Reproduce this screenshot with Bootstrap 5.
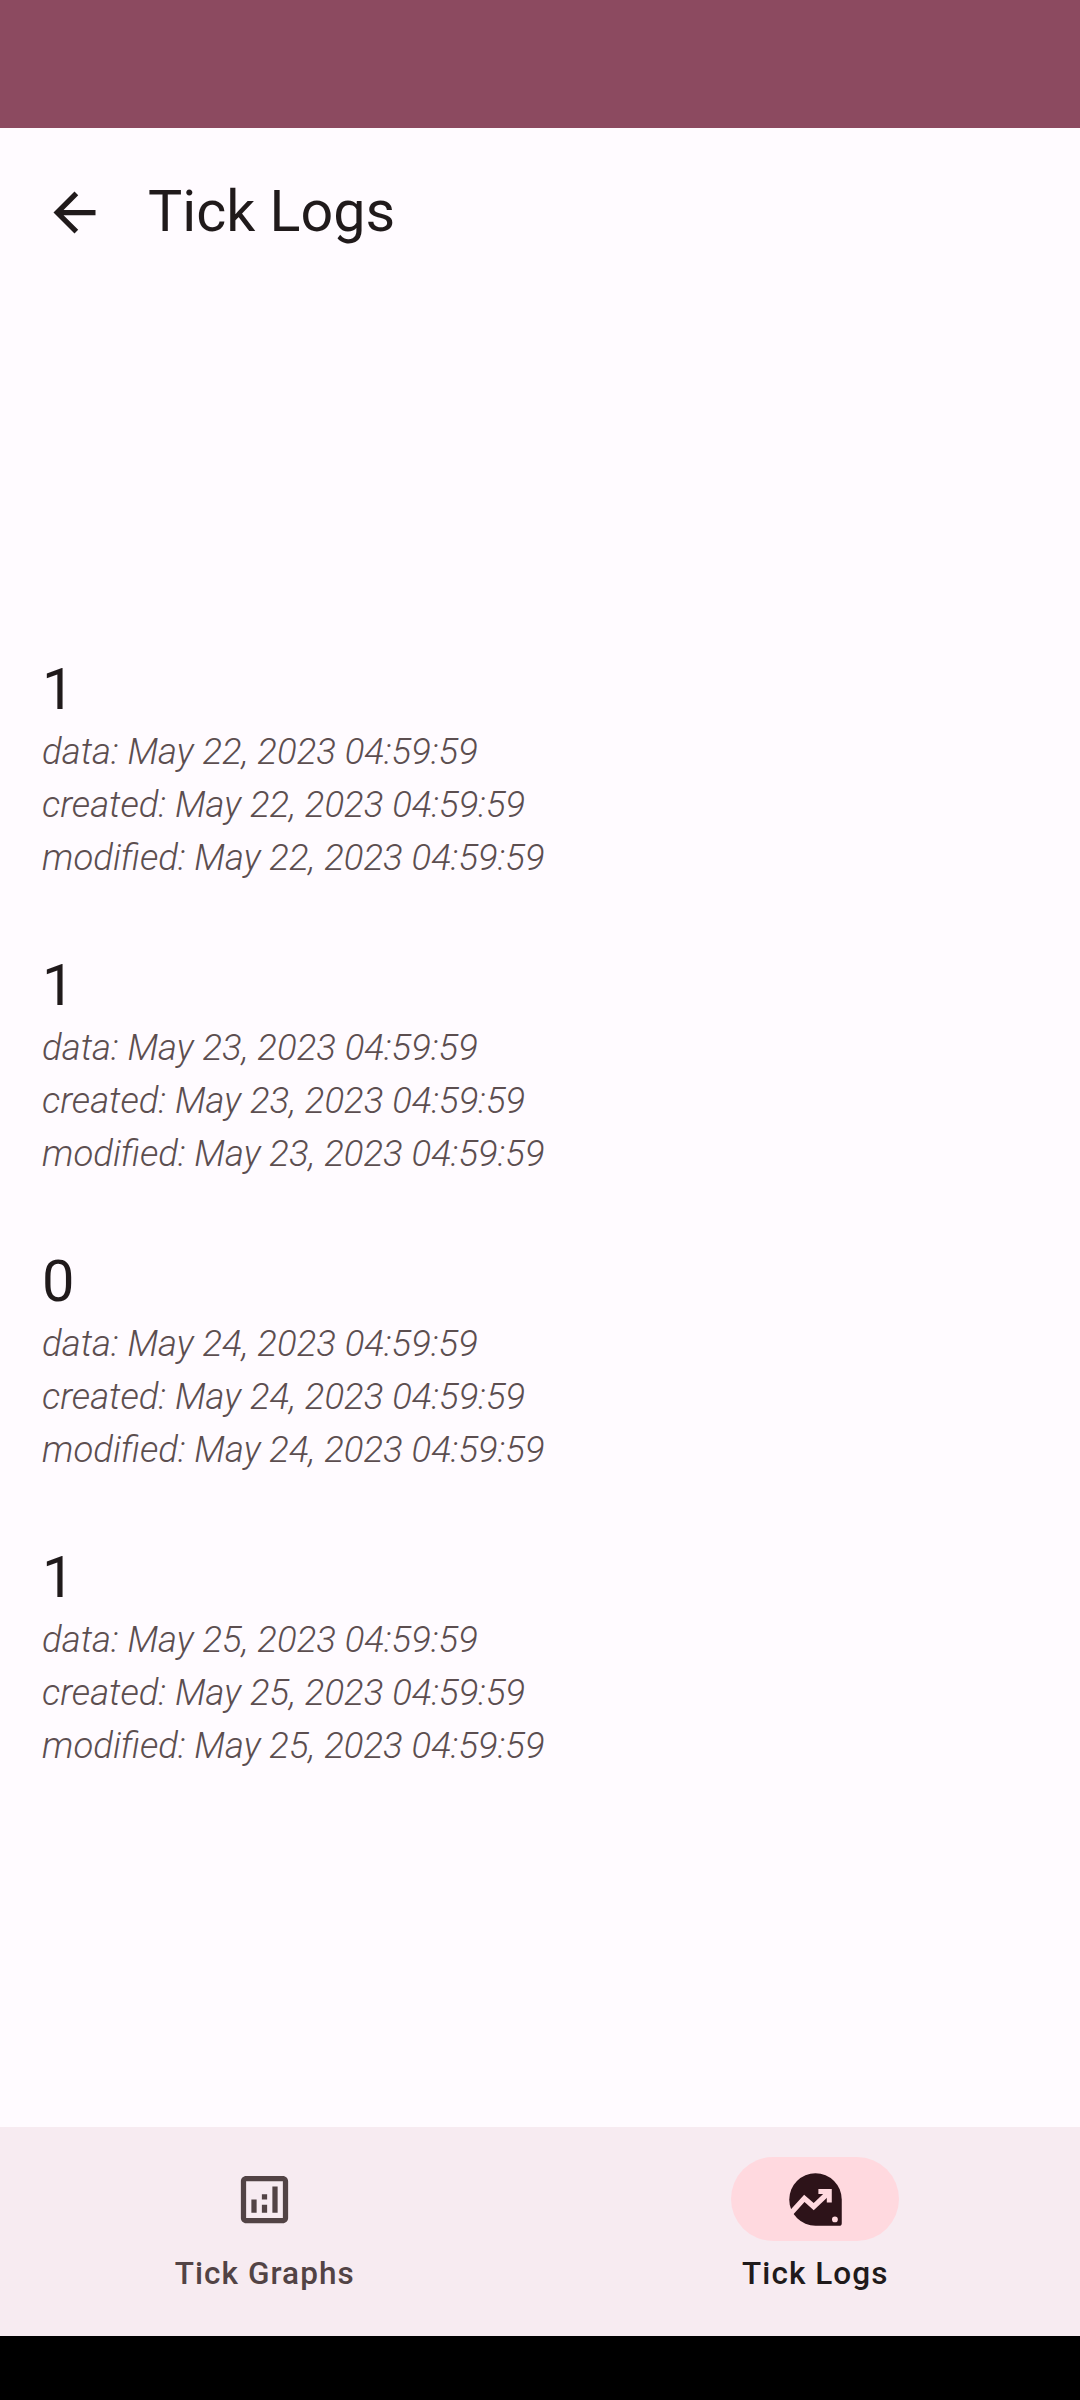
<!DOCTYPE html>
<html>
<head>
    <title>Tick Logs</title>
    <link rel="stylesheet" href="https://cdn.jsdelivr.net/npm/bootstrap@5.3.3/dist/css/bootstrap.min.css">
    <style>
        body {
            background-color: #fffbff;
            font-family: Roboto, "Liberation Sans", sans-serif;
            color: #201a1b;
        }
        .app-page {
            width: 1080px;
            height: 2400px;
        }
        .status-strip {
            height: 128px;
            background-color: #8c4a60;
        }
        .top-bar {
            height: 168px;
            padding-left: 43px;
        }
        .top-bar svg {
            width: 63px;
            height: 63px;
            fill: #201a1b;
        }
        .top-title {
            margin: 0 0 0 42px;
            font-size: 57.4px;
            font-weight: 400;
            line-height: 1;
        }
        .log-list {
            padding-left: 42px;
            padding-top: 56px;
        }
        .log-item {
            height: 296px;
        }
        .log-value {
            padding-top: 6px;
            font-size: 57.75px;
            font-weight: 400;
            line-height: 71px;
        }
        .log-meta {
            font-size: 36.5px;
            font-weight: 300;
            font-style: italic;
            line-height: 53px;
            color: #5c4e50;
        }
        .tab-bar {
            height: 209px;
            background-color: #f7ebf1;
            gap: 21px;
        }
        .tab-item {
            flex: 1 1 0;
            padding-top: 30px;
            font-size: 31.5px;
            font-weight: 500;
            letter-spacing: 1.05px;
            color: #524345;
        }
        .tab-item.is-active {
            color: #201a1b;
        }
        .tab-pill {
            width: 168px;
            height: 84px;
            border-radius: 42px;
        }
        .is-active .tab-pill {
            background-color: #ffd9df;
        }
        .tab-pill svg {
            width: 63px;
            height: 63px;
        }
        .tab-label {
            margin-top: 12px;
            line-height: 42px;
        }
        .nav-floor {
            height: 64px;
            background-color: #000;
        }
    </style>
</head>
<body class="m-0">
<div class="app-page d-flex flex-column">
    <div class="status-strip"></div>

    <div class="top-bar d-flex align-items-center">
        <svg viewBox="0 0 24 24"><path d="M20 11H7.83l5.59-5.59L12 4l-8 8 8 8 1.41-1.41L7.83 13H20v-2z"/></svg>
        <h1 class="top-title">Tick Logs</h1>
    </div>

    <div class="log-list flex-grow-1 d-flex flex-column justify-content-center">
        <div class="log-item">
            <div class="log-value">1</div>
            <div class="log-meta">data: May 22, 2023 04:59:59</div>
            <div class="log-meta">created: May 22, 2023 04:59:59</div>
            <div class="log-meta">modified: May 22, 2023 04:59:59</div>
        </div>
        <div class="log-item">
            <div class="log-value">1</div>
            <div class="log-meta">data: May 23, 2023 04:59:59</div>
            <div class="log-meta">created: May 23, 2023 04:59:59</div>
            <div class="log-meta">modified: May 23, 2023 04:59:59</div>
        </div>
        <div class="log-item">
            <div class="log-value">0</div>
            <div class="log-meta">data: May 24, 2023 04:59:59</div>
            <div class="log-meta">created: May 24, 2023 04:59:59</div>
            <div class="log-meta">modified: May 24, 2023 04:59:59</div>
        </div>
        <div class="log-item">
            <div class="log-value">1</div>
            <div class="log-meta">data: May 25, 2023 04:59:59</div>
            <div class="log-meta">created: May 25, 2023 04:59:59</div>
            <div class="log-meta">modified: May 25, 2023 04:59:59</div>
        </div>
    </div>

    <div class="tab-bar d-flex">
        <div class="tab-item d-flex flex-column align-items-center">
            <div class="tab-pill d-flex align-items-center justify-content-center">
                <svg viewBox="0 0 24 24" fill="#524345"><path d="M19 3H5c-1.1 0-2 .9-2 2v14c0 1.1.9 2 2 2h14c1.1 0 2-.9 2-2V5c0-1.100-.9-2-2-2zm0 16H5V5h14v14zM7 12h2v5H7zm4 2h2v3h-2zm0-4h2v2h-2zm4-3h2v10h-2z"/></svg>
            </div>
            <div class="tab-label">Tick Graphs</div>
        </div>
        <div class="tab-item is-active d-flex flex-column align-items-center">
            <div class="tab-pill d-flex align-items-center justify-content-center">
                <svg viewBox="0 0 24 24">
                    <path fill="#2d1319" d="M12 2A10 10 0 0 0 2 12a10 10 0 0 0 10 10h9a1 1 0 0 0 1-1v-9A10 10 0 0 0 12 2z"/>
                    <path fill="none" stroke="#ffd9df" stroke-width="2" d="M2.600 17.200 7.750 11.550 11.300 14.700 16.400 9.900"/>
                    <path fill="#ffd9df" d="M13.100 8h5.100v5.100h-1.900V9.900h-3.200z"/>
                    <circle fill="#ffd9df" cx="19.400" cy="19.600" r="1.100"/>
                </svg>
            </div>
            <div class="tab-label">Tick Logs</div>
        </div>
    </div>
    <div class="nav-floor"></div>
</div>
<script src="https://cdn.jsdelivr.net/npm/bootstrap@5.3.3/dist/js/bootstrap.bundle.min.js"></script>
</body>
</html>
